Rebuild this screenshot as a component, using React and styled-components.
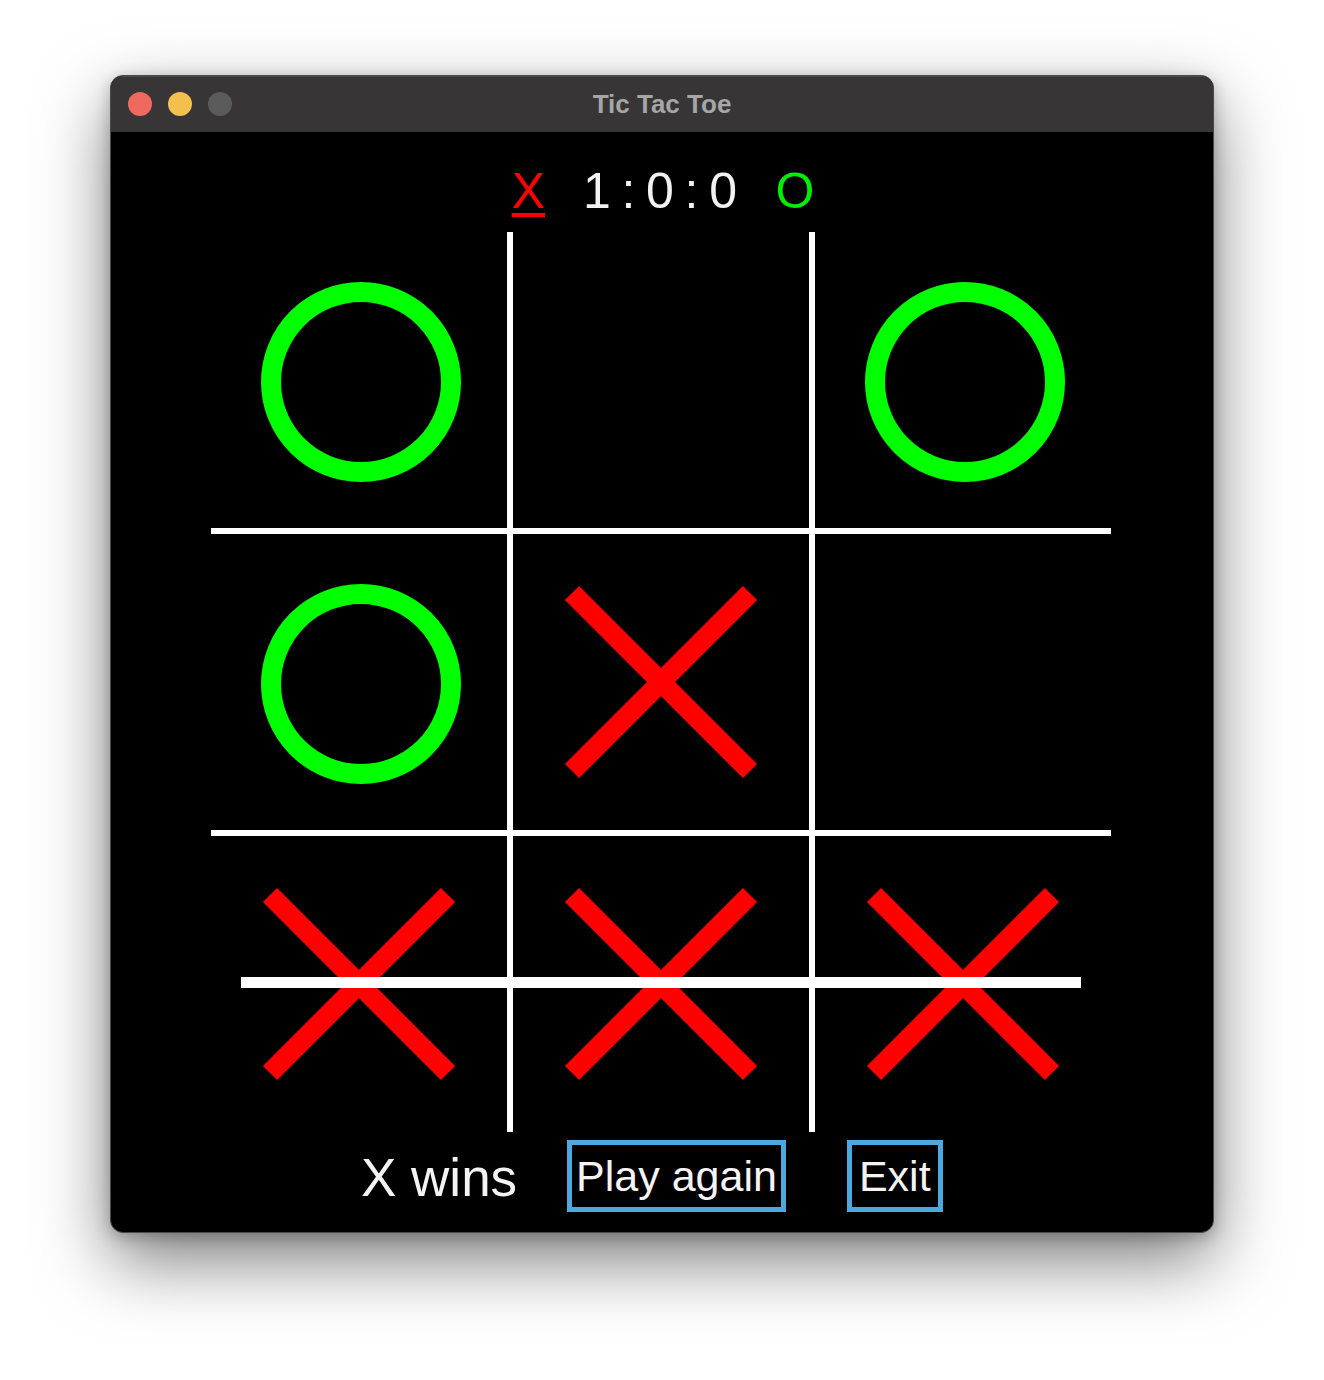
import React from "react";
import styled, { createGlobalStyle } from "styled-components";

const GlobalStyle = createGlobalStyle`
  html, body {
    margin: 0;
    padding: 0;
    background: #ffffff;
  }
  body {
    font-family: "Liberation Sans", Arial, sans-serif;
  }
`;

const Page = styled.div`
  width: 1324px;
  height: 1380px;
  padding-top: 75px;
  box-sizing: border-box;
  display: flex;
  justify-content: center;
  align-items: flex-start;
`;

const Window = styled.div`
  width: 1102px;
  border: 1px solid #4b4a4b;
  border-radius: 13px;
  overflow: hidden;
  background: #000;
  box-shadow: 0 28px 70px rgba(0, 0, 0, 0.5), 0 4px 16px rgba(0, 0, 0, 0.25);
  display: flex;
  flex-direction: column;
`;

const TitleBar = styled.div`
  height: 56px;
  background: #373536;
  box-shadow: inset 0 1px 0 rgba(255, 255, 255, 0.1);
  display: flex;
  align-items: center;
  padding-left: 17px;
`;

const Lights = styled.div`
  display: flex;
  gap: 16px;
`;

const Light = styled.span`
  width: 24px;
  height: 24px;
  border-radius: 50%;
  background: ${(p) => p.$color};
`;

const Title = styled.div`
  flex: 1;
  text-align: center;
  margin-left: -121px;
  font-size: 26px;
  font-weight: bold;
  color: #a6a6a6;
`;

const Content = styled.div`
  width: 1100px;
  height: 1100px;
  display: flex;
  flex-direction: column;
`;

const ScoreRow = styled.div`
  height: 100px;
  box-sizing: border-box;
  padding-top: 34px;
  display: flex;
  justify-content: center;
  align-items: flex-start;
  font-size: 50px;
  line-height: 50px;
  padding-left: 4px;
`;

const Mark = styled.span`
  color: ${(p) => p.$color};
  text-decoration: ${(p) => (p.$active ? "underline" : "none")};
  text-decoration-thickness: 4px;
  text-underline-offset: 5px;
`;

const Tally = styled.span`
  color: #f2f2f2;
  letter-spacing: -1.6px;
  margin: 0 40px 0 38px;
  white-space: pre;
`;

const BoardArea = styled.div`
  display: flex;
  justify-content: center;
`;

const Board = styled.div`
  position: relative;
  width: 900px;
  height: 900px;
  display: grid;
  grid-template-columns: repeat(3, minmax(0, 1fr));
  grid-template-rows: repeat(3, minmax(0, 1fr));
  gap: 6px;
  background: #ffffff;
`;

const Cell = styled.div`
  background: #000;
  display: flex;
  align-items: center;
  justify-content: center;
  overflow: visible;
  min-width: 0;
  min-height: 0;

  svg {
    flex-shrink: 0;
    overflow: visible;
  }
`;

const WinLine = styled.div`
  position: absolute;
  left: 30px;
  right: 30px;
  top: ${(p) => p.$top}px;
  height: 11px;
  background: #ffffff;
`;

const Footer = styled.div`
  height: 100px;
  box-sizing: border-box;
  padding: 8px 0 0 250px;
  display: flex;
  align-items: flex-start;
`;

const Status = styled.div`
  font-size: 53px;
  line-height: 53px;
  color: #f4f4f4;
  margin-top: 11px;
  margin-right: 50px;
`;

const Button = styled.button`
  height: 72px;
  box-sizing: border-box;
  border: 5px solid #4ba9e0;
  background: #000;
  color: #f4f4f4;
  font-family: "Liberation Sans", Arial, sans-serif;
  font-size: 43px;
  line-height: 62px;
  padding: 0 ${(p) => p.$pad}px;
  margin-right: ${(p) => p.$gap || 0}px;
  cursor: pointer;
`;

const Circle = () => (
  <svg width="296" height="296" viewBox="0 0 296 296">
    <circle cx="150" cy="150" r="90" fill="none" stroke="#00ff00" strokeWidth="20" />
  </svg>
);

const Cross = () => (
  <svg width="296" height="296" viewBox="0 0 296 296">
    <path d="M59 59 L237 237 M237 59 L59 237" stroke="#ff0000" strokeWidth="20" />
  </svg>
);

const board = ["O", "", "O", "O", "X", "", "X", "X", "X"];

export default function App() {
  return (
    <>
      <GlobalStyle />
      <Page>
        <Window>
          <TitleBar>
            <Lights>
              <Light $color="#ee6a5f" />
              <Light $color="#f5bf4f" />
              <Light $color="#5c5b5c" />
            </Lights>
            <Title>Tic Tac Toe</Title>
          </TitleBar>
          <Content>
            <ScoreRow>
              <Mark $color="#ff0000" $active>X</Mark>
              <Tally>1 : 0 : 0</Tally>
              <Mark $color="#00ee00">O</Mark>
            </ScoreRow>
            <BoardArea>
              <Board>
                {board.map((v, i) => (
                  <Cell key={i}>
                    {v === "O" && <Circle />}
                    {v === "X" && <Cross />}
                  </Cell>
                ))}
                <WinLine $top={745} />
              </Board>
            </BoardArea>
            <Footer>
              <Status>X wins</Status>
              <Button $pad={4} $gap={61}>Play again</Button>
              <Button $pad={7}>Exit</Button>
            </Footer>
          </Content>
        </Window>
      </Page>
    </>
  );
}
